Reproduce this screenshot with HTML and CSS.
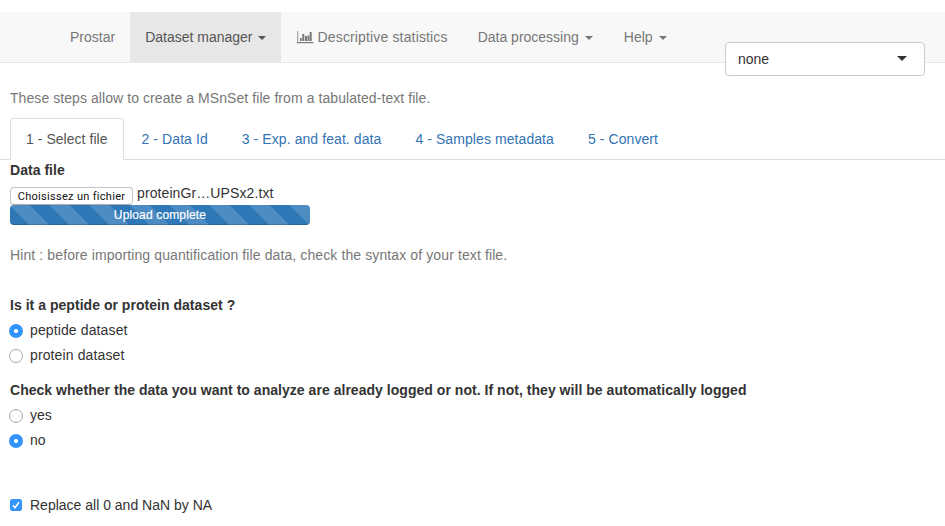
FILE: index.html
```html
<!DOCTYPE html>
<html lang="en">
<head>
<meta charset="utf-8">
<title>Prostar</title>
<link rel="stylesheet" href="styles.css">
</head>
<body>
<nav class="navbar">
  <a class="nav-item brand"><span>Prostar</span></a>
  <a class="nav-item active"><span>Dataset manager</span><i class="caret"></i></a>
  <a class="nav-item"><svg class="chart" width="17" height="13" viewBox="0 0 17 13"><path class="axis" d="M0 0h1.300v11H0z"/><path d="M0 11h16.500v1.200H0z"/><path d="M3 7h1.700v3H3zM5.300 3h2v7h-2zM8 5h2v5H8zM10.500 4.500h1.800v5.500h-1.800zM12.700 1h2v9h-2z"/></svg><span class="t-stats">Descriptive statistics</span></a>
  <a class="nav-item"><span>Data processing</span><i class="caret"></i></a>
  <a class="nav-item help"><span>Help</span><i class="caret"></i></a>
  <div class="select"><span>none</span><i class="select-arrow"></i></div>
</nav>
<main>
  <p class="intro">These steps allow to create a MSnSet file from a tabulated-text file.</p>
  <div class="tabs">
    <a class="tab current">1 - Select file</a>
    <a class="tab">2 - Data Id</a>
    <a class="tab">3 - Exp. and feat. data</a>
    <a class="tab">4 - Samples metadata</a>
    <a class="tab">5 - Convert</a>
  </div>
  <h4>Data file</h4>
  <div class="file"><span class="choose">Choisissez un fichier</span><span class="filename">proteinGr…UPSx2.txt</span></div>
  <div class="progress"><span>Upload complete</span></div>
  <p class="hint">Hint : before importing quantification file data, check the syntax of your text file.</p>
  <h4>Is it a peptide or protein dataset ?</h4>
  <label class="option"><i class="radio on"></i><span class="t-dataset">peptide dataset</span></label>
  <label class="option"><i class="radio"></i><span class="t-dataset">protein dataset</span></label>
  <h4 class="second">Check whether the data you want to analyze are already logged or not. If not, they will be automatically logged</h4>
  <label class="option"><i class="radio"></i><span>yes</span></label>
  <label class="option"><i class="radio on"></i><span>no</span></label>
  <label class="option replace"><i class="checkbox"><svg width="12" height="12" viewBox="0 0 12 12"><path d="M3 6.300 5 8.700 9 3.200"/></svg></i><span>Replace all 0 and NaN by NA</span></label>
</main>
</body>
</html>
```
FILE: styles.css
```css
* { box-sizing: border-box; }
body {
  margin: 0;
  padding-top: 12px;
  height: 526px;
  overflow: hidden;
  background: #fff;
  color: #333;
  font: 14px/20px "Liberation Sans", Arial, sans-serif;
}
p, h4 { margin: 0; white-space: nowrap; }
h4 { font-size: 14px; line-height: 20px; letter-spacing: 0.033px; }
.navbar {
  position: relative;
  display: flex;
  height: 51px;
  padding-left: 55px;
  background: #f8f8f8;
  border-bottom: 1px solid #e7e7e7;
}
.nav-item {
  display: flex;
  align-items: center;
  height: 50px;
  padding: 0 15px;
  color: #777;
  white-space: nowrap;
}
.nav-item.active { background: #e7e7e7; color: #555; height: 51px; padding-bottom: 1px; }
.nav-item.help { margin-left: 1px; }
.caret {
  margin: 2px 0 0 6px;
  border: 4px solid transparent;
  border-top-color: currentColor;
  border-bottom: 0;
}
.active .caret { margin-left: 5px; }
.chart { margin: 1px 4px 0 1px; fill: #777; }
.chart .axis { fill: #aaa; }
.t-stats { letter-spacing: 0.15px; }
.select {
  position: absolute;
  left: 725px;
  top: 30px;
  width: 200px;
  height: 34px;
  display: flex;
  align-items: center;
  justify-content: space-between;
  padding: 0 17px 0 12px;
  background: #fff;
  border: 1px solid #ccc;
  border-radius: 4px;
}
.select-arrow {
  border: 5px solid transparent;
  border-top-color: #333;
  border-bottom: 0;
  margin-top: -2px;
}
main { padding: 25px 0 0; }
main > * { margin-left: 10px; }
.intro, .hint { color: #777; }
.intro { letter-spacing: 0.07px; }
.tabs {
  display: flex;
  height: 42px;
  margin: 10px 0 0;
  padding-left: 10px;
  border-bottom: 1px solid #ddd;
}
.tab {
  height: 41px;
  padding: 10px 15px 0;
  border: 1px solid transparent;
  margin-right: 2px;
  color: #3273b3;
  letter-spacing: 0.08px;
  white-space: nowrap;
}
.tab.current {
  height: 42px;
  border-color: #ddd;
  border-bottom-color: #fff;
  border-radius: 4px 4px 0 0;
  background: #fff;
  color: #555;
  letter-spacing: 0.04px;
}
.file { display: flex; height: 25px; padding-top: 3px; }
.choose {
  width: 123px;
  height: 18px;
  margin-top: 4px;
  border: 1px solid #c4c4c4;
  border-bottom-color: #aaa;
  border-radius: 4px;
  text-align: center;
  color: #111;
  font: 11px/17px Roboto, sans-serif;
  letter-spacing: 0.3px;
  white-space: nowrap;
}
.filename { margin-left: 4px; letter-spacing: 0.1px; }
.progress {
  width: 300px;
  height: 20px;
  border-radius: 4px;
  background: #2e78b7 linear-gradient(45deg, rgba(255,255,255,.15) 25%, transparent 25%, transparent 50%, rgba(255,255,255,.15) 50%, rgba(255,255,255,.15) 75%, transparent 75%) 0 0 / 40px 40px;
  box-shadow: inset 0 -1px 0 rgba(0,0,0,.15);
  color: #fff;
  font-size: 12px;
  letter-spacing: 0.15px;
  -webkit-text-stroke: 0.2px #fff;
  text-align: center;
}
.hint { margin-top: 20px; margin-bottom: 30px; letter-spacing: 0.11px; }
.option { display: flex; align-items: center; height: 20px; margin-top: 5px; margin-left: 9px; white-space: nowrap; }
.t-dataset { letter-spacing: 0.12px; }
.radio {
  width: 14px;
  height: 14px;
  margin: 2px 7px 0 0;
  border: 1px solid #aaa;
  border-radius: 50%;
  background: #fff;
}
.radio.on { border: 0; background: radial-gradient(circle, #fff 0 1.700px, #3395fb 2.300px); }
.second { margin-top: 15px; }
.replace { margin-top: 45px; }
.checkbox {
  width: 12px;
  height: 12px;
  margin: 0 8px 0 1px;
  border-radius: 2.500px;
  background: #3395fb;
}
.checkbox svg { display: block; fill: none; stroke: #fff; stroke-width: 1.600; }
```
